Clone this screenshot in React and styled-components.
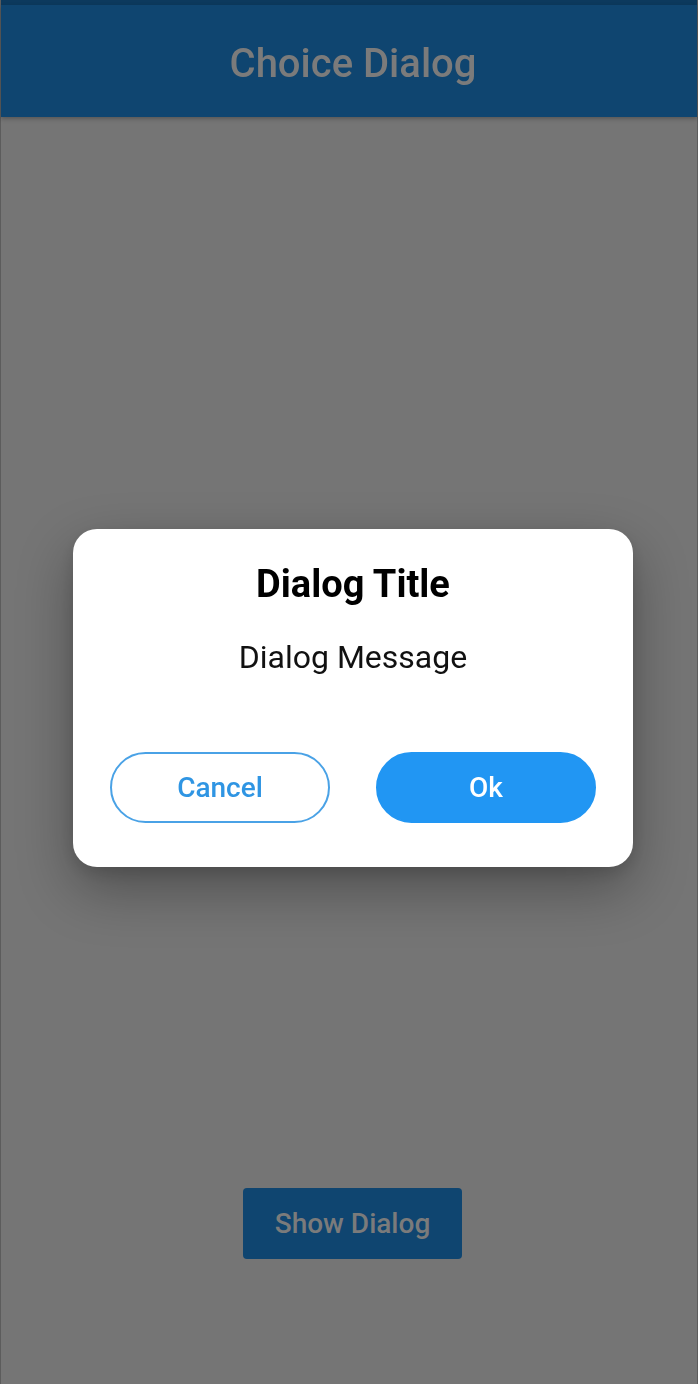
import styled, { createGlobalStyle } from 'styled-components';

const Global = createGlobalStyle`
    html, body {
        margin: 0;
        padding: 0;
        background: #757575;
    }
    body {
        font-family: Roboto, "Noto Sans", sans-serif;
    }
`

const Screen = styled.div`
    display: flex;
    flex-direction: column;
    height: 1384px;
    background: #757575;
    border-left: 1px solid #5c5c5c;
    border-right: 1px solid #5c5c5c;
    box-sizing: border-box;
`

const StatusBar = styled.div`
    height: 5px;
    background: #0c395d;
`

const Header = styled.header`
    height: 112px;
    display: flex;
    align-items: center;
    justify-content: center;
    padding: 4px 0 0 8px;
    box-sizing: border-box;
    background: #0f4570;
    box-shadow: 0 2px 4px rgba(0, 0, 0, 0.25);
    position: relative;
    z-index: 1;
`

const HeaderTitle = styled.h1`
    margin: 0;
    font-size: 40px;
    font-weight: 500;
    color: #7b7b7b;
`

const Body = styled.main`
    flex: 1;
    display: flex;
    flex-direction: column;
    align-items: center;
    justify-content: flex-end;
    padding: 0 0 125px 7px;
`

const ShowButton = styled.button`
    width: 219px;
    height: 71px;
    border: none;
    border-radius: 4px;
    background: #0f4570;
    color: #7b7b7b;
    font-family: inherit;
    font-size: 28px;
    font-weight: 500;
`

const Overlay = styled.div`
    position: fixed;
    inset: 0;
    display: flex;
    align-items: center;
    justify-content: center;
    padding: 12px 0 0 8px;
    box-sizing: border-box;
`

const Card = styled.div`
    width: 560px;
    height: 338px;
    box-sizing: border-box;
    background: #fff;
    border-radius: 24px;
    box-shadow: 0 22px 56px rgba(0, 0, 0, 0.32), 0 6px 16px rgba(0, 0, 0, 0.12);
    display: flex;
    flex-direction: column;
    align-items: center;
    padding: 33px 37px 0;
`

const Title = styled.h2`
    margin: 0;
    font-size: 38px;
    font-weight: 700;
    color: #000;
    line-height: 44px;
`

const Message = styled.p`
    margin: 32px 0 0;
    font-size: 32px;
    color: #111;
    line-height: 38px;
`

const Actions = styled.div`
    display: flex;
    justify-content: space-between;
    width: 100%;
    margin-top: 76px;
`

const Action = styled.button`
    width: 220px;
    height: 71px;
    border-radius: 36px;
    box-sizing: border-box;
    font-family: inherit;
    font-size: 28px;
    font-weight: 500;
    border: 2px solid ${p => p.$filled ? '#2196f3' : '#4aa2e6'};
    background: ${p => p.$filled ? '#2196f3' : '#fff'};
    color: ${p => p.$filled ? '#fff' : '#2f95e3'};
`

export default function App() {
    return (
        <>
            <Global />
            <Screen>
                <StatusBar />
                <Header>
                    <HeaderTitle>Choice Dialog</HeaderTitle>
                </Header>
                <Body>
                    <ShowButton>Show Dialog</ShowButton>
                </Body>
            </Screen>
            <Overlay>
                <Card>
                    <Title>Dialog Title</Title>
                    <Message>Dialog Message</Message>
                    <Actions>
                        <Action>Cancel</Action>
                        <Action $filled>Ok</Action>
                    </Actions>
                </Card>
            </Overlay>
        </>
    )
}
